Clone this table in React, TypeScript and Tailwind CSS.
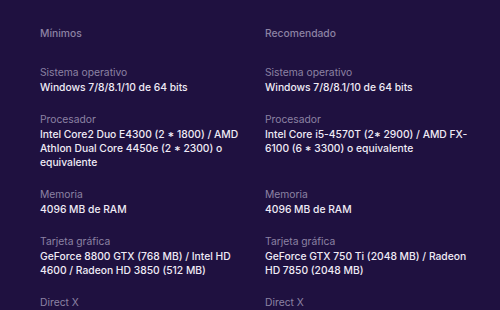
const specs = [
  {
    label: "Sistema operativo",
    min: "Windows 7/8/8.1/10 de 64 bits",
    rec: "Windows 7/8/8.1/10 de 64 bits",
  },
  {
    label: "Procesador",
    min: "Intel Core2 Duo E4300 (2 * 1800) / AMD Athlon Dual Core 4450e (2 * 2300) o equivalente",
    rec: "Intel Core i5-4570T (2* 2900) / AMD FX-6100 (6 * 3300) o equivalente",
  },
  { label: "Memoria", min: "4096 MB de RAM", rec: "4096 MB de RAM" },
  {
    label: "Tarjeta gráfica",
    min: "GeForce 8800 GTX (768 MB) / Intel HD 4600 / Radeon HD 3850 (512 MB)",
    rec: "GeForce GTX 750 Ti (2048 MB) / Radeon HD 7850 (2048 MB)",
  },
  { label: "Direct X", min: "Versión 11", rec: "Versión 11" },
];

function Spec({ label, value }: { label: string; value: string }) {
  return (
    <div>
      <div className="text-[10.3px] leading-[15px] text-[#8c82a3]">{label}</div>
      <div className="text-[10.3px] leading-[14px] font-medium text-[#efebf6]">{value}</div>
    </div>
  );
}

export default function App() {
  return (
    <div
      className="w-[500px] h-[310px] overflow-hidden bg-[#1f1140] pt-[26px] pl-[40px]"
      style={{ fontFamily: "Inter, 'Noto Sans', sans-serif" }}
    >
      <div className="grid grid-cols-[205px_205px] gap-x-[20px] gap-y-[18px]">
        <h3 className="text-[10.3px] leading-[14px] font-medium text-[#8c82a3] mb-[7px]">Mínimos</h3>
        <h3 className="text-[10.3px] leading-[14px] font-medium text-[#8c82a3] mb-[7px]">Recomendado</h3>
        {specs.map((s) => (
          <>
            <Spec key={s.label + "-min"} label={s.label} value={s.min} />
            <Spec key={s.label + "-rec"} label={s.label} value={s.rec} />
          </>
        ))}
      </div>
    </div>
  );
}
